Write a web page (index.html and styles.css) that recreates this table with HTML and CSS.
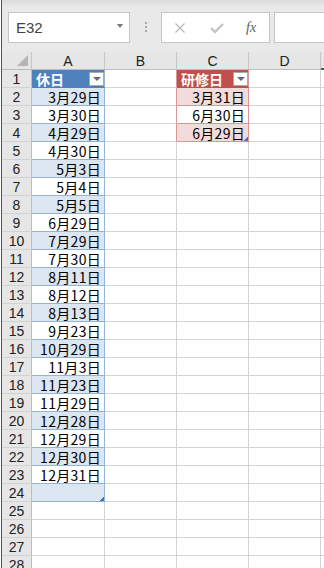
FILE: index.html
```html
<!DOCTYPE html>
<html lang="ja">
<head>
    <meta charset="UTF-8">
    <meta name="viewport" content="width=device-width, initial-scale=1.0">
    <title>休日・研修日</title>
    <link rel="stylesheet" href="styles.css">
</head>
<body>
    <div class="formula-bar">
        <div class="name-box">
            <span class="name-text">E32</span>
            <span class="name-arrow"></span>
        </div>
        <div class="grip"><i></i><i></i><i></i></div>
        <div class="fx-buttons">
            <svg class="fx-icon" width="14" height="14" viewBox="0 0 14 14">
                <path d="M2.5 2.5 L11.5 11.5 M11.5 2.5 L2.5 11.5" stroke="#b9b9b9" stroke-width="1.3" fill="none"/>
            </svg>
            <svg class="fx-icon" width="16" height="14" viewBox="0 0 16 14">
                <path d="M2 7 L6 11 L14 3" stroke="#c4c4c4" stroke-width="2.4" fill="none"/>
            </svg>
            <span class="fx-label">fx</span>
        </div>
        <div class="formula-input"></div>
    </div>

    <div class="sheet" id="sheet">
        <div class="corner">
            <svg width="11" height="11" viewBox="0 0 11 11"><path d="M11 0 L11 11 L0 11 Z" fill="#b5b5b5"/></svg>
        </div>
        <div class="col-head">A</div>
        <div class="col-head">B</div>
        <div class="col-head">C</div>
        <div class="col-head">D</div>
        <div class="col-head col-e"></div>
    </div>

    <script>
        // 休日テーブル（A列）と研修日テーブル（C列）
        const holidays = [
            '3月29日', '3月30日', '4月29日', '4月30日', '5月3日', '5月4日', '5月5日',
            '6月29日', '7月29日', '7月30日', '8月11日', '8月12日', '8月13日', '9月23日',
            '10月29日', '11月3日', '11月23日', '11月29日', '12月28日', '12月29日',
            '12月30日', '12月31日', ''
        ];
        const trainings = ['3月31日', '6月30日', '6月29日'];
        const sheet = document.getElementById('sheet');

        function addCell(className, text) {
            const cell = document.createElement('div');
            cell.className = className;
            if (text) cell.textContent = text;
            sheet.appendChild(cell);
            return cell;
        }

        function addHeader(className, title) {
            const cell = addCell(className);
            const label = document.createElement('span');
            label.textContent = title;
            const btn = document.createElement('span');
            btn.className = 'filter-btn';
            cell.appendChild(label);
            cell.appendChild(btn);
        }

        for (let r = 1; r <= 28; r++) {
            addCell('row-head', String(r));

            // A列
            if (r === 1) {
                addHeader('cell tbl-blue tbl-head', '休日');
            } else if (r - 2 < holidays.length) {
                const i = r - 2;
                let cls = 'cell tbl-blue';
                if (i % 2 === 0) cls += ' band';
                if (i === holidays.length - 1) cls += ' tbl-end';
                addCell(cls, holidays[i]);
            } else {
                addCell('cell');
            }

            // B列
            addCell(r <= 4 ? 'cell edge-red' : 'cell');

            // C列
            if (r === 1) {
                addHeader('cell tbl-red tbl-head', '研修日');
            } else if (r - 2 < trainings.length) {
                const i = r - 2;
                let cls = 'cell tbl-red';
                if (i % 2 === 0) cls += ' band';
                if (i === trainings.length - 1) cls += ' tbl-end';
                addCell(cls, trainings[i]);
            } else {
                addCell('cell');
            }

            addCell('cell');
            addCell('cell');
        }
    </script>
</body>
</html>
```

FILE: styles.css
```css
:root {
    --excel-green: #217346;
    --grid-line: #d4d4d4;
    --head-bg: #e6e6e6;
    --head-line: #c6c6c6;
    --blue-head: #4f81bd;
    --blue-band: #dce6f1;
    --blue-line: #95b3d7;
    --red-head: #c0504d;
    --red-band: #f2dcdb;
    --red-line: #da9694;
    --handle: #4472c4;
}

html {
    background-color: #fff;
}

body {
    margin: 0 0 0 1px;
    border-left: 1px solid var(--excel-green);
    width: 322px;
    height: 568px;
    overflow: hidden;
    background-color: #fff;
    font-family: 'Liberation Sans', 'Noto Sans CJK JP', sans-serif;
}

/* 数式バー */
.formula-bar {
    display: flex;
    align-items: flex-start;
    height: 52px;
    padding-top: 12px;
    box-sizing: border-box;
    background: linear-gradient(#dadada, #e9e9e9 7px, #e9e9e9);
}

.name-box {
    display: flex;
    align-items: center;
    justify-content: space-between;
    width: 122px;
    height: 31px;
    margin-left: 6px;
    padding: 0 6px 0 7px;
    box-sizing: border-box;
    background-color: #fff;
    border: 1px solid var(--head-line);
}

.name-text {
    font-size: 15px;
    color: #444;
}

.name-arrow {
    width: 0;
    height: 0;
    border-left: 3.5px solid transparent;
    border-right: 3.5px solid transparent;
    border-top: 4px solid #7a7a7a;
    margin-top: -4px;
}

.grip {
    display: flex;
    flex-direction: column;
    gap: 2px;
    margin: 10px 0 0 15px;
}

.grip i {
    display: block;
    width: 2px;
    height: 2px;
    background-color: #a8a8a8;
}

.fx-buttons {
    display: flex;
    align-items: center;
    width: 109px;
    height: 31px;
    margin-left: 14px;
    padding-left: 11px;
    gap: 22px;
    box-sizing: border-box;
    background-color: #fff;
    border: 1px solid var(--head-line);
}

.fx-icon {
    display: block;
    flex: none;
}

.fx-label {
    margin-left: -1px;
    font-family: 'Liberation Serif', serif;
    font-style: italic;
    font-size: 14px;
    color: #606060;
}

.formula-input {
    flex: 1;
    height: 31px;
    margin-left: 4px;
    box-sizing: border-box;
    background-color: #fff;
    border: 1px solid var(--head-line);
    border-right: none;
}

/* シート */
.sheet {
    display: grid;
    grid-template-columns: 30px 73px 72px 72px 72px 1fr;
    grid-auto-rows: 18px;
}

.corner,
.col-head,
.row-head,
.cell {
    box-sizing: border-box;
    line-height: 16px;
}

.corner {
    display: flex;
    align-items: flex-end;
    justify-content: flex-end;
    padding: 0 3px 3px 0;
    background-color: var(--head-bg);
    border-right: 1px solid var(--head-line);
    border-bottom: 1px solid #bdbdbd;
}

.corner svg {
    display: block;
}

.col-head {
    display: flex;
    align-items: center;
    justify-content: center;
    background-color: var(--head-bg);
    border-right: 1px solid var(--head-line);
    border-bottom: 1px solid #bdbdbd;
    font-size: 14px;
    color: #222;
}

.col-e {
    border-right: none;
    border-bottom: 2px solid var(--excel-green);
}

.row-head {
    display: flex;
    align-items: center;
    justify-content: center;
    background-color: var(--head-bg);
    border-right: 1px solid #bdbdbd;
    border-bottom: 1px solid #d2d2d2;
    font-size: 14px;
    color: #222;
}

.cell {
    position: relative;
    display: flex;
    align-items: center;
    justify-content: flex-end;
    padding-right: 3px;
    border-right: 1px solid var(--grid-line);
    border-bottom: 1px solid var(--grid-line);
    font-family: 'Noto Sans CJK JP', sans-serif;
    font-size: 14px;
    letter-spacing: 0.3px;
    color: #000;
    white-space: nowrap;
}

.tbl-blue {
    border-right-color: var(--blue-line);
    border-bottom-color: var(--blue-line);
}
.tbl-blue.band {
    background-color: var(--blue-band);
}

.tbl-red {
    border-right-color: var(--red-line);
    border-bottom-color: var(--red-line);
}
.tbl-red.band {
    background-color: var(--red-band);
}

.edge-red {
    border-right-color: var(--red-line);
}

.tbl-head {
    justify-content: space-between;
    padding: 0 0 0 4px;
    color: #fff;
    font-weight: bold;
    font-size: 14px;
    letter-spacing: 0;
}
.tbl-blue.tbl-head {
    background-color: var(--blue-head);
    border-bottom-color: var(--blue-head);
}
.tbl-red.tbl-head {
    background-color: var(--red-head);
    border-bottom-color: var(--red-head);
}

.filter-btn {
    position: relative;
    width: 15px;
    height: 14px;
    margin-top: 1px;
    box-sizing: border-box;
    background-color: #fff;
    border: 1px solid #a9a9a9;
}
.filter-btn::after {
    content: '';
    position: absolute;
    left: 3px;
    top: 4px;
    border-left: 4px solid transparent;
    border-right: 4px solid transparent;
    border-top: 4px solid #5f6b7a;
}

/* テーブル右下のサイズ変更ハンドル */
.tbl-end::after {
    content: '';
    position: absolute;
    right: 0;
    bottom: 0;
    width: 4px;
    height: 4px;
    background: linear-gradient(135deg, transparent 45%, var(--handle) 45%);
}
```
